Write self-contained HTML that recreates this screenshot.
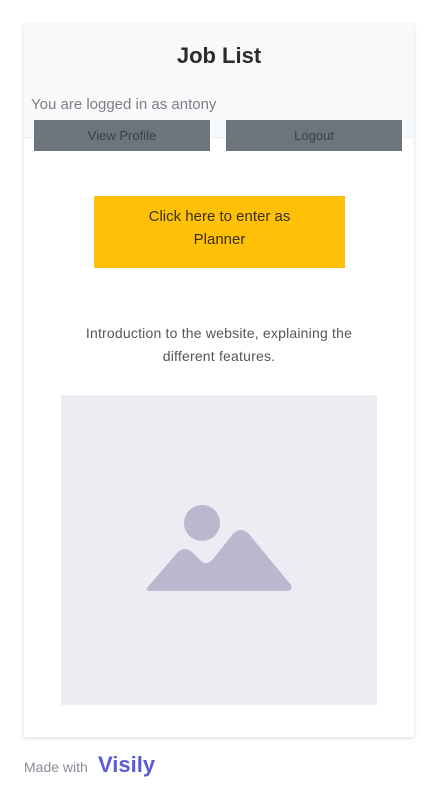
<!DOCTYPE html>
<html><head><style>
body{margin:0;width:438px;height:801px;background:#fff;font-family:"Liberation Sans",sans-serif;position:relative;overflow:hidden}
.card{position:absolute;left:24px;top:24px;width:390px;height:713px;background:#fff;box-shadow:0 1px 4px rgba(0,0,0,.15)}
.hdr{position:absolute;left:0;top:0;width:390px;height:113px;background:#f8f9fa;border-bottom:1px solid #eceef0}
h1{position:absolute;left:0;width:390px;top:19px;margin:0;text-align:center;font-size:22px;font-weight:bold;color:#2b2b2b}
.log{position:absolute;left:7px;top:72px;font-size:15px;color:#7c7f84}
.btn{position:absolute;top:96px;width:176px;height:31px;background:#6c757d;color:#3a4046;font-size:13px;text-align:center;line-height:32px}
.yel{position:absolute;left:70px;top:172px;width:251px;height:72px;background:#ffc107;color:#3b2f10;font-size:15px;text-align:center;line-height:23px;box-sizing:border-box;padding-top:9px}
.intro{position:absolute;left:40px;width:310px;top:298px;text-align:center;font-size:14px;line-height:23px;color:#555;letter-spacing:.2px}
.ph{position:absolute;left:37px;top:371px;width:316px;height:310px;background:#edecf2}
.made{position:absolute;left:24px;top:759px;font-size:14px;color:#8a8a99}
.vis{position:absolute;left:98px;top:752px;font-size:22px;font-weight:bold;color:#5b5bd6}
</style></head><body>
<div class="card">
<div class="hdr"></div>
<h1>Job List</h1>
<div class="log">You are logged in as antony</div>
<div class="btn" style="left:10px">View Profile</div>
<div class="btn" style="left:202px">Logout</div>
<div class="yel">Click here to enter as<br>Planner</div>
<div class="intro">Introduction to the website, explaining the<br>different features.</div>
<div class="ph"><svg width="316" height="310" viewBox="0 0 316 310">
<circle cx="141" cy="128" r="18" fill="#bab8cf"/>
<path d="M86 193 L116 158 Q124 150 132 158 L140 166 Q146 171 152 164 L172 139 Q180 131 188 139 L230 190 Q232 196 226 196 L90 196 Q84 196 86 193Z" fill="#bab8cf"/>
</svg></div>
</div>
<div class="made">Made with</div>
<div class="vis">Visily</div>
</body></html>
